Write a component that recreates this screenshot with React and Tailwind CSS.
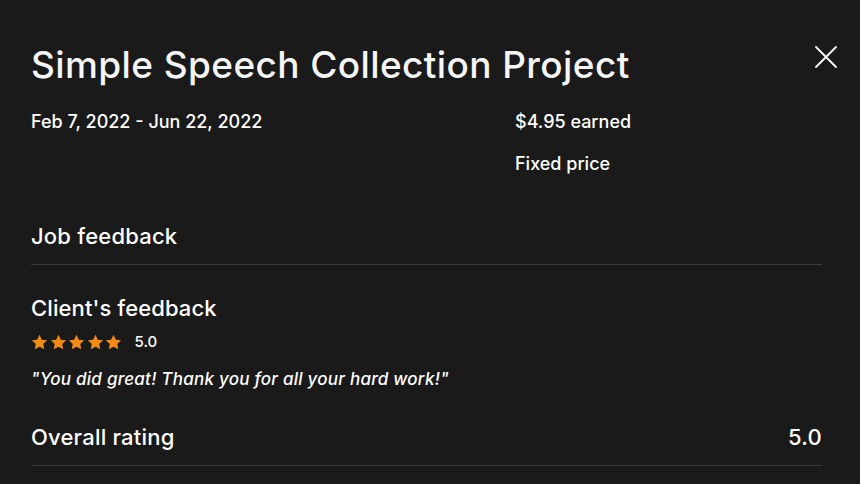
import React from 'react'

function Star() {
  return (
    <svg viewBox="0 0 24 24" className="w-[17px] h-[17px]" fill="#f28a16">
      <path d="M12 1.2l3.3 6.8 7.5.9-5.5 5.2 1.4 7.5L12 17.9l-6.7 3.7 1.4-7.5-5.5-5.2 7.5-.9z" />
    </svg>
  )
}

export default function App() {
  return (
    <div className="w-[860px] h-[484px] bg-[#1a1a1a] text-white overflow-hidden" style={{ fontFamily: 'Inter, "Liberation Sans", Arial, sans-serif' }}>
      <div className="pl-[31px] pr-[38px] pt-[39px]">
        {/* Header */}
        <div className="flex items-start justify-between">
          <h1 className="text-[37px] leading-[52px] font-medium tracking-[0.4px] text-[#f5f5f5]">Simple Speech Collection Project</h1>
          <button className="mt-[6px] mr-[-16px] text-white">
            <svg width="24" height="24" viewBox="0 0 24 24" fill="none" stroke="currentColor" strokeWidth="1.8" strokeLinecap="round">
              <path d="M2 2L22 22M22 2L2 22" />
            </svg>
          </button>
        </div>

        {/* Meta */}
        <div className="flex mt-[20px] text-[18px] leading-[22px] font-medium">
          <div className="w-[484px]">Feb 7, 2022 - Jun 22, 2022</div>
          <div className="flex flex-col gap-[20px]">
            <div>$4.95 earned</div>
            <div>Fixed price</div>
          </div>
        </div>

        {/* Job feedback */}
        <div className="mt-[48px] pb-[15px] border-b border-[#3a3a3a] text-[22px] leading-[26px] font-medium tracking-[0.2px]">Job feedback</div>

        {/* Client's feedback */}
        <div className="mt-[30px] text-[22px] leading-[26px] font-medium tracking-[0.1px]">Client's feedback</div>
        <div className="flex items-center mt-[12px] gap-[1.5px]">
          <Star /><Star /><Star /><Star /><Star />
          <span className="ml-[11px] text-[15px] leading-[18px] font-medium">5.0</span>
        </div>
        <div className="mt-[18px] text-[17px] leading-[20px] italic font-medium tracking-[0.25px]">"You did great! Thank you for all your hard work!"</div>

        {/* Overall */}
        <div className="flex justify-between items-center mt-[35px] pb-[15px] border-b border-[#3a3a3a] text-[22px] leading-[26px] font-medium tracking-[0.2px]">
          <span>Overall rating</span>
          <span>5.0</span>
        </div>
      </div>
    </div>
  )
}
